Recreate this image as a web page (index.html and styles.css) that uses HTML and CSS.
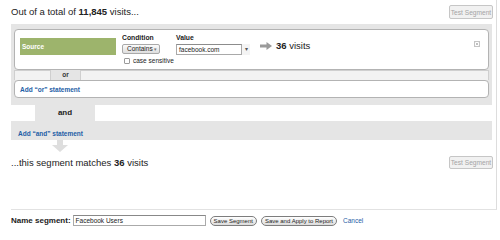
FILE: index.html
```html
<!DOCTYPE html>
<html>
<head>
    <meta http-equiv="Content-Type" content="text/html; charset=UTF-8" />
	<title>Advanced Segment</title>
<link rel="stylesheet" href="styles.css">
</head>
<body>
	<div id="main">
		<div class="top-row">
			<div class="title">Out of a total of <b>11,845</b> visits...</div>
			<button class="test-button">Test Segment</button>
		</div>

		<div class="and-block">
			<div class="or-box">
				<div class="dimension">Source</div>
				<div class="field cond-field">
					<div class="label">Condition</div>
					<div class="select">Contains <span class="caret">&#9662;</span></div>
					<div class="case"><span class="checkbox"></span>case sensitive</div>
				</div>
				<div class="field value-field">
					<div class="label">Value</div>
					<div class="combo">
						<span class="combo-text">facebook.com</span>
						<span class="combo-arrow">&#9662;</span>
					</div>
				</div>
				<div class="match">
					<svg width="12" height="8" viewBox="0 0 12 8"><path d="M0 2.5h6.5V0L12 4 6.5 8V5.5H0z" fill="#9a9a9a"/></svg>
					<span class="match-text"><b>36</b> visits</span>
				</div>
				<div class="remove">
					<svg width="6" height="6" viewBox="0 0 6 6"><rect x="0.5" y="0.5" width="5" height="5" fill="#fff" stroke="#c4c4c4"/><path d="M1.8 1.8l2.4 2.4M4.2 1.8L1.8 4.2" stroke="#b0b0b0" stroke-width="0.8"/></svg>
				</div>
			</div>
			<div class="or-tabs">
				<div class="tab-side tab-left"></div>
				<div class="or-label">or</div>
				<div class="tab-side tab-right"></div>
			</div>
			<div class="or-box add-box">
				<a href="" class="link">Add &ldquo;or&rdquo; statement</a>
			</div>
		</div>

		<div class="and-tab-row">
			<div class="and-tab">and</div>
		</div>
		<div class="and-block add-and">
			<a href="" class="link">Add &ldquo;and&rdquo; statement</a>
		</div>

		<div class="down-arrow">
			<svg width="16" height="12" viewBox="0 0 16 12"><path d="M5 0h6v5h5l-8 7-8-7h5z" fill="#dedede"/></svg>
		</div>

		<div class="result-row">
			<div class="title">...this segment matches <b>36</b> visits</div>
			<button class="test-button">Test Segment</button>
		</div>
	</div>

	<div class="footer">
		<span class="name-label">Name segment:</span>
		<div class="name-input">Facebook Users</div>
		<button class="pill">Save Segment</button>
		<button class="pill">Save and Apply to Report</button>
		<a href="" class="cancel">Cancel</a>
	</div>
</body>
</html>
```

FILE: styles.css
```css
body{
	margin: 0;
	font-family: "Liberation Sans", Arial, sans-serif;
	color: #222222;
	background-color: #ffffff;
}
#main{
	margin-left: 11px;
	width: 481px;
	padding-right: 4px;
	padding-bottom: 40px;
	border-right: 1px solid #dddddd;
	border-bottom: 1px solid #e2e2e2;
}
.top-row{
	display: flex;
	justify-content: space-between;
	align-items: flex-start;
	height: 24px;
}
.title{
	font-size: 9.5px;
	line-height: 11px;
	padding-top: 6px;
}
.test-button{
	font-family: "Liberation Sans", Arial, sans-serif;
	font-size: 6.6px;
	color: #a4a4a4;
	background: #f1f1f1;
	border: 1px solid #c6c6c6;
	border-radius: 2px;
	width: 44px;
	height: 14px;
	padding: 0;
	margin-top: 5px;
	margin-right: -1px;
	white-space: nowrap;
}
.and-block{
	background-color: #e5e5e5;
	padding: 5px 3px 7px 3px;
}
.or-box{
	display: flex;
	align-items: flex-start;
	background-color: #ffffff;
	border: 1px solid #b3b3b3;
	border-radius: 4px;
	height: 41px;
	box-sizing: border-box;
}
.dimension{
	margin: 8px 0 0 5px;
	width: 96px;
	height: 17px;
	background-color: #9db46c;
	color: #ffffff;
	font-size: 6.5px;
	font-weight: bold;
	line-height: 17px;
	padding-left: 2px;
	box-sizing: border-box;
}
.field{
	padding-top: 4px;
	font-size: 6.5px;
}
.label{
	font-weight: bold;
	font-size: 6.8px;
	line-height: 8px;
	height: 8px;
	margin-bottom: 2px;
}
.cond-field{
	margin-left: 6px;
	width: 38px;
}
.select{
	width: 38px;
	height: 10px;
	box-sizing: border-box;
	border: 1px solid #a9a9a9;
	border-radius: 2px;
	background: linear-gradient(#fbfbfb, #dedede);
	line-height: 8px;
	padding-left: 4px;
}
.caret{
	color: #777777;
	font-size: 5px;
}
.case{
	display: flex;
	align-items: center;
	margin-top: 3px;
	height: 7px;
	line-height: 7px;
	white-space: nowrap;
}
.checkbox{
	flex: none;
	width: 6px;
	height: 6px;
	box-sizing: border-box;
	border: 1px solid #9a9a9a;
	border-radius: 1px;
	background: #ffffff;
	margin: 0 3px 0 2px;
}
.value-field{
	margin-left: 16px;
}
.combo{
	display: flex;
	height: 11px;
}
.combo-text{
	width: 66px;
	height: 11px;
	box-sizing: border-box;
	border: 1px solid #a9a9a9;
	border-top-color: #8c8c8c;
	line-height: 9px;
	padding-left: 2px;
}
.combo-arrow{
	width: 8px;
	text-align: center;
	color: #555555;
	font-size: 6px;
	line-height: 11px;
	background: #f4f4f4;
}
.match{
	display: flex;
	align-items: center;
	margin: 11px 0 0 10px;
	height: 9px;
}
.match-text{
	font-size: 9.5px;
	margin-left: 4px;
	line-height: 9px;
}
.remove{
	margin: 11px 8px 0 auto;
	height: 6px;
}
.remove svg{
	display: block;
}
.or-tabs{
	display: flex;
	height: 10px;
}
.tab-side{
	background-color: #f2f2f2;
	border: 1px solid #cfcfcf;
	border-bottom: none;
	box-sizing: border-box;
}
.tab-left{
	width: 37px;
}
.tab-right{
	flex: 1;
}
.or-label{
	width: 29px;
	text-align: center;
	font-size: 6.5px;
	font-weight: bold;
	line-height: 10px;
	color: #333333;
}
.add-box{
	height: 18px;
	align-items: center;
	padding-left: 5px;
}
.link{
	font-size: 6.5px;
	font-weight: bold;
	color: #1d5ea6;
	text-decoration: none;
}
.and-tab-row{
	height: 16px;
}
.and-tab{
	margin-left: 24px;
	width: 60px;
	height: 16px;
	background-color: #e5e5e5;
	text-align: center;
	font-size: 8px;
	font-weight: bold;
	line-height: 16px;
}
.add-and{
	height: 19px;
	padding: 0 0 0 7px;
	line-height: 19px;
}
.down-arrow{
	margin-left: 41px;
	height: 12px;
}
.down-arrow svg{
	display: block;
}
.result-row{
	display: flex;
	justify-content: space-between;
	align-items: center;
	margin-top: 4px;
}
.result-row .title{
	padding-top: 0;
}
.result-row .test-button{
	margin-top: 0;
	height: 13px;
}
.footer{
	display: flex;
	align-items: center;
	margin-left: 11px;
	padding-top: 5px;
	height: 11px;
}
.name-label{
	font-size: 8px;
	font-weight: bold;
	margin-right: 2px;
}
.name-input{
	width: 133px;
	height: 11px;
	box-sizing: border-box;
	border: 1px solid #aaaaaa;
	border-top-color: #888888;
	font-size: 6.5px;
	line-height: 9px;
	padding-left: 2px;
}
.pill{
	font-family: "Liberation Sans", Arial, sans-serif;
	font-size: 6px;
	color: #222222;
	height: 10px;
	line-height: 8px;
	padding: 0 3px;
	margin-left: 4px;
	border: 1px solid #7d7d7d;
	border-radius: 5px;
	background: linear-gradient(#ffffff, #dcdcdc);
	white-space: nowrap;
}
.cancel{
	margin-left: 6px;
	font-size: 6.5px;
	color: #1d5ea6;
	text-decoration: none;
}
```
